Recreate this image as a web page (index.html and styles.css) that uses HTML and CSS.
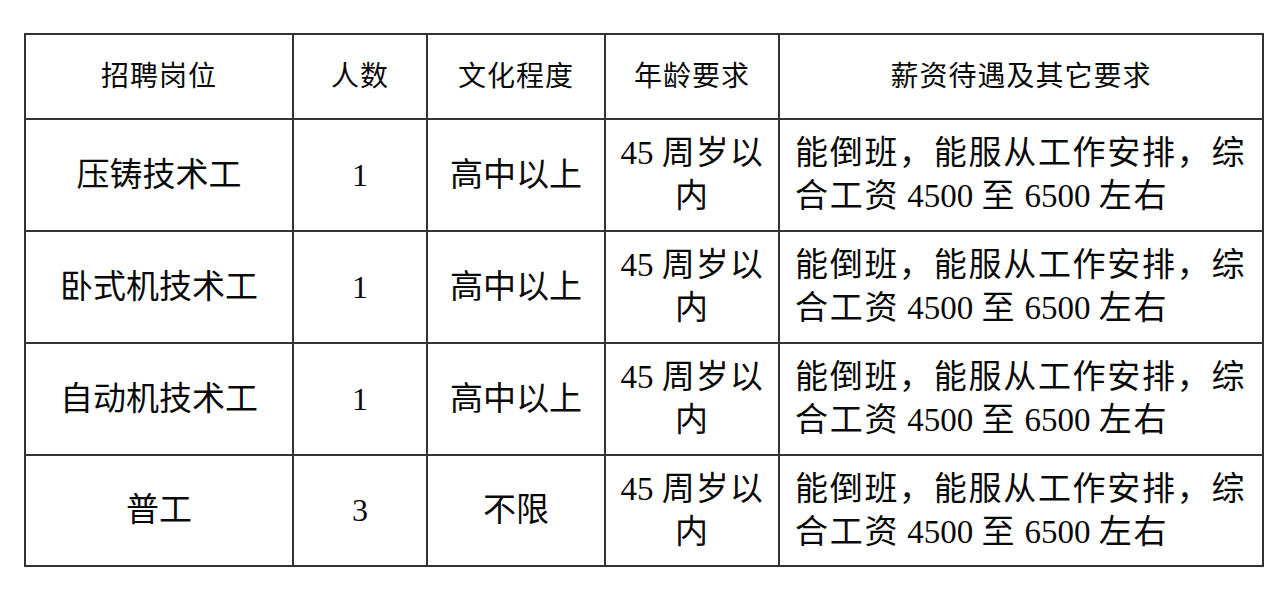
FILE: index.html
```html
<!DOCTYPE html>
<html lang="zh-CN">
<head>
<meta charset="utf-8">
<title>招聘岗位</title>
<link rel="stylesheet" href="styles.css">
</head>
<body>
<main class="page">
  <table class="jobs">
    <colgroup>
      <col class="c-pos">
      <col class="c-num">
      <col class="c-edu">
      <col class="c-age">
      <col class="c-pay">
    </colgroup>
    <thead>
      <tr class="head-row">
        <th>招聘岗位</th>
        <th>人数</th>
        <th>文化程度</th>
        <th>年龄要求</th>
        <th>薪资待遇及其它要求</th>
      </tr>
    </thead>
    <tbody>
      <tr class="body-row">
        <td>压铸技术工</td>
        <td class="num">1</td>
        <td>高中以上</td>
        <td class="age"><span class="n">45 </span>周岁以<br>内</td>
        <td class="pay">能倒班，能服从工作安排，综<br>合工资<span class="n"> 4500 </span>至<span class="n"> 6500 </span>左右</td>
      </tr>
      <tr class="body-row">
        <td>卧式机技术工</td>
        <td class="num">1</td>
        <td>高中以上</td>
        <td class="age"><span class="n">45 </span>周岁以<br>内</td>
        <td class="pay">能倒班，能服从工作安排，综<br>合工资<span class="n"> 4500 </span>至<span class="n"> 6500 </span>左右</td>
      </tr>
      <tr class="body-row">
        <td>自动机技术工</td>
        <td class="num">1</td>
        <td>高中以上</td>
        <td class="age"><span class="n">45 </span>周岁以<br>内</td>
        <td class="pay">能倒班，能服从工作安排，综<br>合工资<span class="n"> 4500 </span>至<span class="n"> 6500 </span>左右</td>
      </tr>
      <tr class="body-row last">
        <td>普工</td>
        <td class="num">3</td>
        <td>不限</td>
        <td class="age"><span class="n">45 </span>周岁以<br>内</td>
        <td class="pay">能倒班，能服从工作安排，综<br>合工资<span class="n"> 4500 </span>至<span class="n"> 6500 </span>左右</td>
      </tr>
    </tbody>
  </table>
</main>
</body>
</html>
```
FILE: styles.css
```css
html, body {
  margin: 0;
  padding: 0;
  background: #ffffff;
}

.page {
  padding: 33px 0 0 24px;
}

.jobs {
  border-collapse: collapse;
  table-layout: fixed;
  width: 1238px;
  font-family: "Liberation Serif", "Noto Sans CJK SC", serif;
  color: #0a0a0a;
}

.c-pos { width: 268px; }
.c-num { width: 134px; }
.c-edu { width: 178px; }
.c-age { width: 174px; }
.c-pay { width: 484px; }

.jobs th,
.jobs td {
  border: 2px solid #333333;
  padding: 0;
  text-align: center;
  vertical-align: middle;
  white-space: nowrap;
}

.head-row {
  height: 85px;
}

.head-row th {
  font-size: 28px;
  font-weight: 400;
  letter-spacing: 1px;
  line-height: 36px;
}

.body-row {
  height: 112px;
}

.body-row.last {
  height: 111px;
}

.body-row td {
  font-size: 33px;
  line-height: 43px;
}

.body-row td.num {
  font-size: 32px;
}

.body-row td.age {
  letter-spacing: 1px;
}

.body-row td.pay {
  text-align: left;
  padding-left: 15px;
  letter-spacing: 1.7px;
}

.n {
  letter-spacing: 0;
}
```
